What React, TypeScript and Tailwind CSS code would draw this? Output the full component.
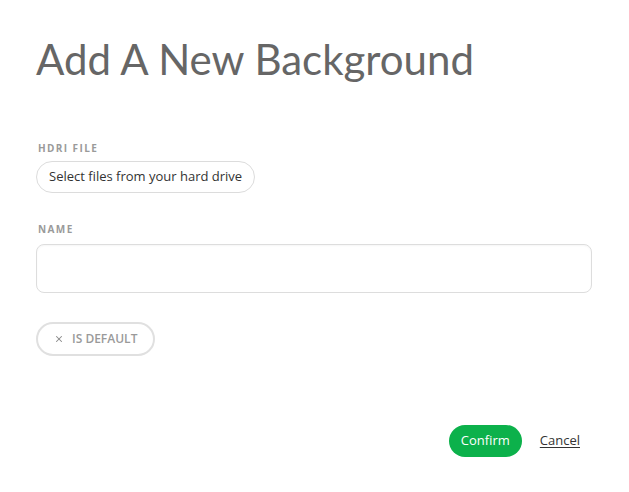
import { X } from 'lucide-react';

export default function App() {
  return (
    <div className="min-h-screen bg-white pl-[36px] pr-[37px] pt-[34px] font-['Open_Sans',sans-serif]">
      <h1 className="font-['Lato',sans-serif] text-[42px] leading-[50px] text-[#666666]">
        Add A New Background
      </h1>

      <div className="mt-[57px]">
        <label className="block pl-[2px] text-[10px] leading-[14px] font-bold tracking-[1.4px] text-[#9a9a9a]">
          HDRI FILE
        </label>
        <button className="mt-[6px] h-[32px] rounded-full border border-[#dcdcdc] bg-white px-[12px] text-[13px] text-[#333333]">
          Select files from your hard drive
        </button>
      </div>

      <div className="mt-[29px]">
        <label className="block pl-[2px] text-[10px] leading-[14px] font-bold tracking-[1.4px] text-[#9a9a9a]">
          NAME
        </label>
        <input
          type="text"
          className="mt-[8px] block h-[49px] w-full rounded-[8px] border border-[#dddddd] bg-white px-3 text-[14px] shadow-[inset_0_1px_2px_rgba(0,0,0,0.04)] outline-none"
        />
      </div>

      <button className="mt-[29px] flex h-[34px] items-center gap-[8px] rounded-full border-2 border-[#e0e0e0] bg-white pl-[16px] pr-[16px] text-[12px] font-semibold text-[#9a9a9a]">
        <X size={10} strokeWidth={2.5} className="text-[#8a8a8a]" />
        IS DEFAULT
      </button>

      <div className="mt-[69px] flex items-center justify-end gap-[18px] pr-[12px]">
        <button className="h-[32px] rounded-full bg-[#0cb14b] px-[12px] text-[13px] text-white">
          Confirm
        </button>
        <button className="text-[13px] text-[#333333] underline underline-offset-2">
          Cancel
        </button>
      </div>
    </div>
  );
}
